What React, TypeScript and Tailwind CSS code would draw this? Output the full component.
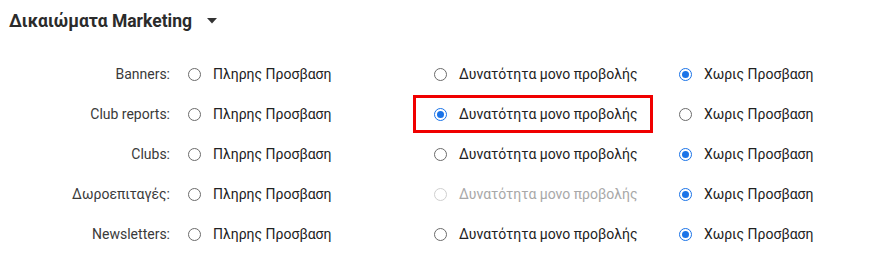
import React from "react";

type Choice = "full" | "view" | "none";

const rows: { label: string; value: Choice; disabledView?: boolean; marked?: boolean }[] = [
  { label: "Banners:", value: "none" },
  { label: "Club reports:", value: "view", marked: true },
  { label: "Clubs:", value: "none" },
  { label: "Δωροεπιταγές:", value: "none", disabledView: true },
  { label: "Newsletters:", value: "none" },
];

const options: { key: Choice; text: string }[] = [
  { key: "full", text: "Πληρης Προσβαση" },
  { key: "view", text: "Δυνατότητα μονο προβολής" },
  { key: "none", text: "Χωρις Προσβαση" },
];

const Radio = ({ checked, disabled }: { checked: boolean; disabled?: boolean }) => {
  if (checked) {
    return (
      <span className="w-[13px] h-[13px] rounded-full border-[1.5px] border-[#1a73e8] flex items-center justify-center shrink-0">
        <span className="w-[7px] h-[7px] rounded-full bg-[#1a73e8]" />
      </span>
    );
  }
  return (
    <span
      className={
        disabled
          ? "w-[13px] h-[13px] rounded-full border border-[#cfcfcf] shrink-0"
          : "w-[13px] h-[13px] rounded-full border border-[#6b6b6b] shrink-0"
      }
    />
  );
};

export default function App() {
  return (
    <div className="w-[871px] h-[264px] bg-white font-['Roboto',sans-serif] overflow-hidden">
      {/* Section title */}
      <div className="flex items-center pl-[9px] pt-[10px] h-[32px]">
        <h2 className="text-[17.5px] leading-[22px] font-bold text-[#2b2b2b]">Δικαιώματα Marketing</h2>
        <svg width="10" height="6" viewBox="0 0 10 6" className="ml-[15px]">
          <path d="M0 0 L10 0 L5 5.5 Z" fill="#333" />
        </svg>
      </div>

      {/* Permission rows */}
      <div className="mt-[22px] grid grid-cols-[170px_245px_245px_1fr]">
        {rows.map((row) => (
          <React.Fragment key={row.label}>
            <div className="h-[40px] flex items-center justify-end text-[14px] text-[#3a3a3a]">{row.label}</div>
            {options.map((opt, i) => {
              const disabled = opt.key === "view" && row.disabledView;
              return (
                <div
                  key={opt.key}
                  className={
                    i === 0
                      ? "relative h-[40px] flex items-center gap-[12px] pl-[18px] text-[14px]"
                      : "relative h-[40px] flex items-center gap-[12px] pl-[19px] text-[14px]"
                  }
                >
                  <Radio checked={row.value === opt.key} disabled={disabled} />
                  <span className={disabled ? "text-[#a8a8a8]" : "text-[#222]"}>{opt.text}</span>
                  {row.marked && row.value === opt.key && (
                    <div className="absolute left-[-2px] top-[1px] w-[240px] h-[38px] border-[3px] border-[#f00000] pointer-events-none" />
                  )}
                </div>
              );
            })}
          </React.Fragment>
        ))}
      </div>
    </div>
  );
}
